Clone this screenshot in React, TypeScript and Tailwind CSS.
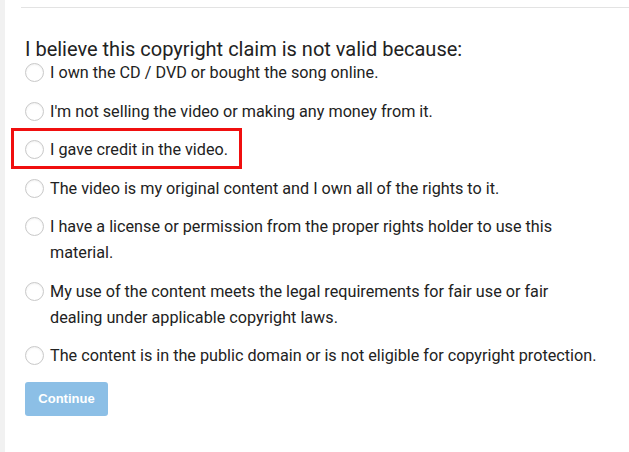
import React from "react";

const reasons = [
  "I own the CD / DVD or bought the song online.",
  "I'm not selling the video or making any money from it.",
  "I gave credit in the video.",
  "The video is my original content and I own all of the rights to it.",
  "I have a license or permission from the proper rights holder to use this material.",
  "My use of the content meets the legal requirements for fair use or fair dealing under applicable copyright laws.",
  "The content is in the public domain or is not eligible for copyright protection.",
];

export default function App() {
  return (
    <div className="flex min-h-[452px] w-[629px] bg-white font-['Roboto',sans-serif] text-[#222]">
      {/* left gutter */}
      <div className="w-[5px] shrink-0 bg-[#f1f1f1]" />

      <div className="flex-1 pl-[16px]">
        <div className="mt-[7px] h-px bg-[#e3e3e3]" />

        <div className="pl-[4px] pr-[20px]">
          <h2 className="mt-[31px] text-[20px] leading-[20px] text-[#222]">
            I believe this copyright claim is not valid because:
          </h2>

          <div className="mt-[1px] flex flex-col gap-[12.5px]">
            {reasons.map((r, i) => (
              <label key={i} className="relative flex items-start gap-[6px] text-[16.2px] leading-[26px]">
                <span className="mt-[3px] h-[19px] w-[19px] shrink-0 rounded-full border border-[#c9c9c9] bg-white shadow-[inset_0_1px_2px_rgba(0,0,0,0.06)]" />
                <span className="pr-[9px]">{r}</span>
                {i === 2 && (
                  <span className="pointer-events-none absolute -left-[14px] -top-[9px] h-[41px] w-[231px] border-[3px] border-[#f00f0f]" />
                )}
              </label>
            ))}
          </div>

          <button className="mt-[13px] h-[34px] w-[83px] rounded-[3px] bg-[#8cbfe6] font-['Liberation_Sans',Arial,sans-serif] text-[13px] font-bold text-white">
            Continue
          </button>
        </div>
      </div>
    </div>
  );
}
